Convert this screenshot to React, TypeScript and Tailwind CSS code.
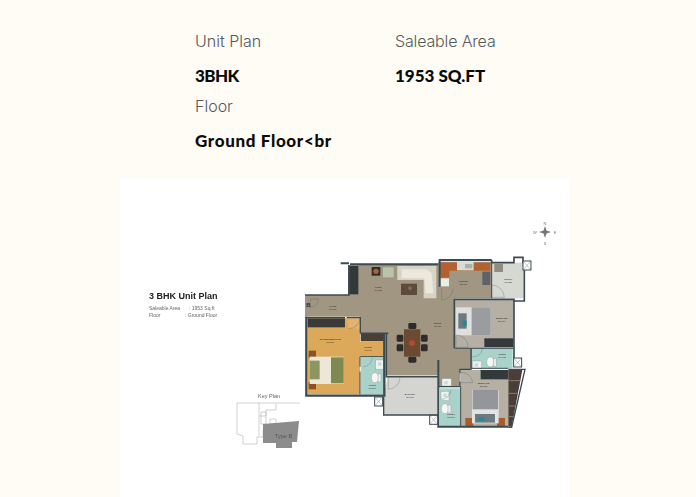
const Wall = ({ d, w = 4 }: { d: string; w?: number }) => (
  <path d={d} fill="none" stroke="#3c4a52" strokeWidth={w} />
);

const Sink = ({ x, y, r = false }: { x: number; y: number; r?: boolean }) => (
  <g>
    <rect x={x} y={y} width={r ? 28 : 24} height={r ? 22 : 28} fill="#eef2f0" stroke="#7d8d8a" strokeWidth="1" />
    <rect x={x + 7} y={y + 7} width="10" height="10" fill="#cfd8d6" />
  </g>
);

const Wc = ({ x, y }: { x: number; y: number }) => (
  <g>
    <ellipse cx={x} cy={y} rx="11" ry="15" fill="#f6f7f6" stroke="#7d8d8a" strokeWidth="1" />
    <rect x={x + 9} y={y - 11} width="9" height="24" fill="#eceeee" stroke="#7d8d8a" strokeWidth="1" />
  </g>
);

const Shaft = ({ x, y }: { x: number; y: number }) => (
  <g>
    <rect x={x} y={y} width="24" height="27" fill="#fff" stroke="#3c4a52" strokeWidth="3" />
    <path d={`M${x + 3} ${y + 3}L${x + 21} ${y + 24}M${x + 21} ${y + 3}L${x + 3} ${y + 24}`} stroke="#555" strokeWidth="1" />
  </g>
);

const Label = ({ x, y, a, b }: { x: number; y: number; a: string; b: string }) => (
  <g fontFamily="'Liberation Sans', sans-serif" textAnchor="middle" fill="#3d3a34">
    <text x={x} y={y} fontSize="6.5" fontWeight="700">{a}</text>
    <text x={x} y={y + 9} fontSize="6">{b}</text>
  </g>
);

function FloorPlan() {
  return (
    <svg viewBox="0 0 449 319" className="block h-[319px] w-[449px] blur-[0.4px]">
      <g transform="translate(175 72) scale(0.3333)">
        {/* floors */}
        <path d="M30 135H160V45H430V35H590V145H480V295H525V360H495V410H430V375H275V250H195V200H30Z" fill="#a09682" />
        <rect x="590" y="38" width="95" height="107" fill="#d6d8d2" />
        <rect x="480" y="150" width="175" height="145" fill="#b5afa4" />
        <rect x="528" y="295" width="125" height="60" fill="#a9d2ca" />
        <path d="M497 360H640V530H497Z" fill="#b5afa4" />
        <path d="M640 360H682L650 530H640Z" fill="#4a3f38" />
        <path d="M642 392L676 392M642 430L669 430M642 468L662 468M642 500L656 500" stroke="#8a7a6c" strokeWidth="3" />
        <rect x="435" y="415" width="62" height="115" fill="#a9d2ca" />
        <path d="M278 380H430V495H265V440Z" fill="#d4d5d0" />
        <path d="M38 205H195V275H268V320H195V433H38Z" fill="#dca85a" />
        <rect x="197" y="322" width="71" height="111" fill="#a9d2ca" />
        <rect x="38" y="205" width="112" height="27" fill="#3b3a38" />
        <rect x="197" y="250" width="70" height="24" fill="#4b3f33" />
        <rect x="160" y="208" width="35" height="28" fill="#e3b36b" />
        <rect x="568" y="265" width="87" height="26" fill="#34393c" />
        <rect x="557" y="360" width="83" height="28" fill="#34393c" />
        <rect x="160" y="48" width="30" height="85" fill="#33383a" />

        {/* kitchen */}
        <rect x="436" y="38" width="150" height="24" fill="#b5602f" />
        <rect x="436" y="38" width="27" height="45" fill="#b5602f" />
        <rect x="486" y="36" width="50" height="25" fill="#d9dcd6" />
        <rect x="510" y="42" width="22" height="13" fill="#aab0ac" />
        <rect x="562" y="65" width="24" height="40" fill="#5d6468" />
        <rect x="436" y="85" width="26" height="24" fill="#e9eee9" />
        <rect x="598" y="42" width="26" height="24" fill="#8f8e7e" />

        {/* living */}
        <rect x="230" y="51" width="26" height="26" fill="#2f2c2a" />
        <circle cx="243" cy="64" r="8" fill="#b5602f" />
        <rect x="264" y="52" width="32" height="30" fill="#b9c4a8" />
        <path d="M307 48H424V145H386V90H307Z" fill="#d8d3c7" />
        <path d="M320 58L395 58L410 70L415 130L392 130L388 85H320Z" fill="#ece8dd" />
        <rect x="318" y="101" width="48" height="34" fill="#5c4a3c" />
        <circle cx="345" cy="115" r="6" fill="#866a50" />

        {/* dining */}
        <g fill="#2d2c2a">
          <rect x="340" y="219" width="24" height="18" rx="4" />
          <rect x="340" y="320" width="24" height="18" rx="4" />
          <rect x="305" y="254" width="20" height="21" rx="4" />
          <rect x="305" y="283" width="20" height="21" rx="4" />
          <rect x="378" y="254" width="20" height="21" rx="4" />
          <rect x="378" y="283" width="20" height="21" rx="4" />
        </g>
        <rect x="327" y="238" width="49" height="82" fill="#6b4a32" />
        <circle cx="351" cy="279" r="9" fill="#b24a32" />

        {/* master bed */}
        <rect x="41" y="302" width="22" height="22" fill="#8c5226" />
        <rect x="41" y="396" width="22" height="22" fill="#8c5226" />
        <rect x="44" y="320" width="102" height="82" fill="#ece7d8" />
        <rect x="108" y="322" width="38" height="78" fill="#7f8a50" />
        <rect x="44" y="332" width="30" height="28" fill="#8d9560" />
        <rect x="44" y="360" width="30" height="28" fill="#8d9560" />

        {/* bedroom 2 */}
        <rect x="482" y="172" width="105" height="84" fill="#dfe0de" />
        <rect x="530" y="172" width="57" height="84" fill="#9a9ca0" />
        <rect x="490" y="190" width="25" height="46" fill="#6d7a80" />
        <rect x="503" y="212" width="12" height="16" fill="#1f8a9a" />

        {/* bedroom 3 */}
        <rect x="511" y="504" width="24" height="24" fill="#a75d2a" />
        <rect x="606" y="504" width="24" height="24" fill="#a75d2a" />
        <rect x="531" y="420" width="80" height="100" fill="#e3e4e2" />
        <rect x="533" y="420" width="76" height="58" fill="#93969a" />
        <rect x="540" y="492" width="60" height="26" fill="#6d7a80" />
        <rect x="550" y="502" width="18" height="10" fill="#1f8a9a" />

        {/* fixtures */}
        <Sink x={242} y={330} />
        <Wc x={240} y={383} />
        <Sink x={532} y={333} r />
        <Wc x={586} y={336} />
        <Sink x={438} y={424} />
        <Wc x={450} y={476} />
        <Sink x={441} y={386} r />

        {/* doors */}
        <g fill="none" stroke="#5b636a" strokeWidth="1">
          <path d="M70 147A24 24 0 0 1 46 172V147Z" />
          <path d="M160 236A33 33 0 0 0 195 205" />
          <path d="M440 115V150A34 34 0 0 0 474 115" />
          <path d="M590 105V142H628A38 38 0 0 0 590 105" />
          <path d="M483 255V292H520A37 37 0 0 0 483 255" />
          <path d="M532 320A26 26 0 0 0 562 297" />
          <path d="M497 367V398H533A34 34 0 0 0 497 367" />
          <path d="M205 350A28 28 0 0 0 232 322" />
          <path d="M280 382V418A36 36 0 0 0 315 382" />
          <path d="M438 448A30 30 0 0 0 468 420" />
        </g>

        <text x="40" y="171" fontFamily="'Liberation Sans', sans-serif" fontWeight="700" fontSize="18" textAnchor="middle" fill="#22292d">B</text>

        {/* walls */}
        <Wall d="M137 40H162M165 43H430" w={6} />
        <Wall d="M30 135H162V45" w={5} />
        <Wall d="M34 200V437H268V250" w={7} />
        <Wall d="M34 203H150M155 203H196V250" w={4} />
        <Wall d="M196 250H280" w={5} />
        <Wall d="M196 320H268M195 320V350M195 365V433" w={3} />
        <Wall d="M274 250V380H430" w={5} />
        <Wall d="M266 440V495H430" w={4} />
        <Wall d="M431 30H590M434 30V110" w={6} />
        <Wall d="M590 30V38H657V22H684V38H688V153H655" w={5} />
        <Wall d="M590 36V145" w={3} />
        <Wall d="M478 148H657V330M478 148V295" w={5} />
        <Wall d="M480 295H528V355H640M655 295H528" w={3} />
        <Wall d="M528 295V358H495V370M495 395V410H430" w={4} />
        <Wall d="M430 330V530H640" w={6} />
        <Wall d="M497 410V530" w={3} />
        <Wall d="M640 358H690L650 532H640" w={4} />
        <Shaft x={239} y={441} />
        <Shaft x={404} y={496} />
        <Shaft x={684} y={33} />
        <Shaft x={656} y={324} />

        {/* labels */}
        <Label x={250} y={114} a="LIVING" b="370x330" />
        <Label x={113} y={170} a="FOYER" b="270x120" />
        <Label x={505} y={97} a="KITCHEN" b="330x240" />
        <Label x={640} y={89} a="UTILITY" b="190x250" />
        <Label x={620} y={207} a="BEDROOM" b="360x390" />
        <Label x={428} y={223} a="DINING" b="429x360" />
        <Label x={106} y={270} a="MASTER BEDROOM" b="330x350" />
        <Label x={220} y={295} a="DRESS" b="150x140" />
        <Label x={622} y={316} a="TOILET" b="264x130" />
        <Label x={232} y={407} a="TOILET" b="150x240" />
        <Label x={345} y={436} a="BALCONY" b="334x200" />
        <Label x={566} y={403} a="BEDROOM" b="360x360" />
        <Label x={468} y={495} a="TOILET" b="150x240" />
      </g>

      {/* title */}
      <g fontFamily="'Liberation Sans', sans-serif">
        <text x="29" y="120.5" fontSize="9" fontWeight="700" fill="#222">3 BHK Unit Plan</text>
        <g fontSize="5" fill="#666">
          <text x="29" y="132">Saleable Area</text>
          <text x="69" y="132">: 1953 Sq.ft</text>
          <text x="29" y="139">Floor</text>
          <text x="65" y="139">: Ground Floor</text>
        </g>
        <text x="138" y="220" fontSize="5.5" fill="#666">Key Plan</text>
      </g>

      {/* key plan */}
      <g fill="none" stroke="#b4b4b4" strokeWidth="0.6">
        <path d="M117 225H180M117 225V256L123 258V266H137V259H144M139 225V258M139 238H146V232H156V226" />
        <path d="M141 234H146V246H141ZM143 252H148V260H143ZM150 241H156V246H150Z" />
      </g>
      <path d="M143 246L179 243L177 264H172V270H156V265H143Z" fill="#8c8c8c" />
      <text x="155" y="260" fontFamily="'Liberation Sans', sans-serif" fontSize="5.5" fill="#555">Type B</text>

      {/* compass */}
      <g fill="#777">
        <path d="M425 48L426.5 52.5L431 54L426.5 55.5L425 60L423.5 55.5L419 54L423.5 52.5Z" />
        <g fontFamily="'Liberation Sans', sans-serif" fontSize="4" textAnchor="middle">
          <text x="425" y="46.5">N</text>
          <text x="425" y="66.5">S</text>
          <text x="415" y="55.5">W</text>
          <text x="435" y="55.5">E</text>
        </g>
      </g>
    </svg>
  );
}

export default function App() {
  const label = "text-[16px] leading-[24px] font-light text-[#55595c] [font-family:Inter,sans-serif]";
  const value = "text-[17px] leading-[24px] font-black text-[#0a0a0a] whitespace-nowrap [font-family:Lato,sans-serif]";
  return (
    <div className="h-[497px] w-[696px] overflow-hidden bg-[#fefcf4]">
      <div className="grid w-[595px] grid-cols-2 pl-[195px] pt-[29px]">
        <div className="flex h-[65px] flex-col gap-[11px]">
          <div className={label}>Unit Plan</div>
          <div className={`${value} tracking-[-0.6px]`}>3BHK</div>
        </div>
        <div className="flex h-[65px] flex-col gap-[11px]">
          <div className={`${label} tracking-[-0.15px]`}>Saleable Area</div>
          <div className={value}>1953 SQ.FT</div>
        </div>
        <div className="flex flex-col gap-[11px]">
          <div className={label}>Floor</div>
          <div className={`${value} tracking-[0.65px]`}>Ground Floor&lt;br</div>
        </div>
      </div>
      <div className="ml-[120px] mt-[25px] h-[319px] w-[449px] bg-white">
        <FloorPlan />
      </div>
    </div>
  );
}
